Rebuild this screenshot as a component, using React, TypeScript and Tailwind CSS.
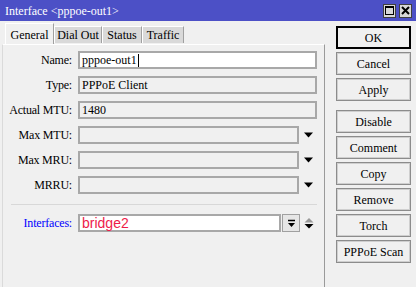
const serif = "font-['Liberation_Serif',serif]";

function DownArrow() {
  return (
    <svg width="9" height="6" viewBox="0 0 9 6">
      <path d="M0 0.5 H9 L4.5 5.5 Z" fill="#000" />
    </svg>
  );
}

function Field({ label, value, white, arrow }: { label: string; value?: string; white?: boolean; arrow?: boolean }) {
  return (
    <div className="flex items-center h-[18px]">
      <div className={`w-[69px] text-right text-[12px] tracking-[-0.2px] text-black ${serif}`}>{label}</div>
      <div
        className={`ml-[6px] h-[18px] border-2 border-[#a8a8a8] flex items-center pl-[2px] text-[12px] text-black ${serif} ${white ? "bg-white" : "bg-[#f0f0f0]"} ${arrow ? "w-[221px]" : "w-[239px]"}`}
      >
        {value}
        {white && <span className="ml-[1px] inline-block w-[1px] h-[13px] bg-black" />}
      </div>
      {arrow && (
        <div className="w-[18px] flex justify-center">
          <DownArrow />
        </div>
      )}
    </div>
  );
}

function Btn({ label, primary }: { label: string; primary?: boolean }) {
  return (
    <div
      className={`w-[75px] h-[23px] flex items-center justify-center text-[12px] text-black bg-[#f0f0f0] ${serif} ${
        primary ? "border-2 border-black" : "border border-[#8c8c8c] shadow-[inset_0_0_0_1px_#cfcfcf]"
      }`}
    >
      {label}
    </div>
  );
}

export default function App() {
  return (
    <div className="w-[416px] h-[287px] bg-[#f0f0f0] flex flex-col overflow-hidden">
      <div className="h-[21px] bg-[#4c50c6] flex items-center justify-between pl-[5px] pr-[4px]">
        <span className={`text-white text-[12px] ${serif}`}>Interface &lt;pppoe-out1&gt;</span>
        <div className="flex gap-[3px]">
          <div className="w-[13px] h-[14px] bg-[#d8d8d8] border border-[#404040] flex items-center justify-center">
            <div className="w-[9px] h-[9px] border border-black border-t-2" />
          </div>
          <div className="w-[13px] h-[14px] bg-[#d8d8d8] border border-[#404040] flex items-center justify-center">
            <svg width="9" height="9" viewBox="0 0 9 9">
              <path d="M1 1 L8 8 M8 1 L1 8" stroke="#000" strokeWidth="2" />
            </svg>
          </div>
        </div>
      </div>
      <div className="flex flex-1">
        <div className="w-[325px] pl-[2px] flex flex-col">
          <div className="h-[23px] pl-[3px] flex items-end">
            <div className={`w-[49px] h-[21px] bg-[#f0f0f0] border-t border-l border-white border-r border-r-[#a0a0a0] flex items-start justify-center pt-[2px] text-[12px] text-black ${serif}`}>
              General
            </div>
            <div className={`w-[48px] h-[17px] bg-[#d9d9d9] border-t border-l border-white border-r border-r-[#a0a0a0] mb-[1px] flex items-center justify-center text-[12px] text-black ${serif}`}>
              Dial Out
            </div>
            <div className={`w-[40px] h-[17px] bg-[#d9d9d9] border-t border-l border-white border-r border-r-[#a0a0a0] mb-[1px] flex items-center justify-center text-[12px] text-black ${serif}`}>
              Status
            </div>
            <div className={`w-[42px] h-[17px] bg-[#d9d9d9] border-t border-l border-white border-r border-r-[#a0a0a0] mb-[1px] flex items-center justify-center text-[12px] text-black ${serif}`}>
              Traffic
            </div>
          </div>
          <div className="flex-1 border-t border-t-white border-l border-l-[#dadada] border-r border-r-[#9a9a9a] pt-[6px] flex flex-col">
            <Field label="Name:" value="pppoe-out1" white />
            <div className="mt-[7px]"><Field label="Type:" value="PPPoE Client" /></div>
            <div className="mt-[7px]"><Field label="Actual MTU:" value="1480" /></div>
            <div className="mt-[7px]"><Field label="Max MTU:" arrow /></div>
            <div className="mt-[7px]"><Field label="Max MRU:" arrow /></div>
            <div className="mt-[7px]"><Field label="MRRU:" arrow /></div>
            <div className="mt-[10px] ml-[8px] w-[306px] h-[1px] bg-[#d8d8d8]" />
            <div className="mt-[9px] flex items-center h-[18px]">
              <div className={`w-[69px] text-right text-[12px] tracking-[-0.2px] text-[#0000ff] ${serif}`}>Interfaces:</div>
              <div className="ml-[6px] w-[203px] h-[18px] border-2 border-[#a8a8a8] bg-white flex items-center pl-[2px] text-[14px] text-[#ee1b4a] font-['Liberation_Sans',sans-serif]">
                bridge2
              </div>
              <div className="ml-[1px] w-[18px] h-[18px] border border-[#a0a0a0] bg-[#e6e6e6] flex items-center justify-center">
                <svg width="9" height="9" viewBox="0 0 9 9">
                  <path d="M1 1.5 H8" stroke="#000" strokeWidth="1.5" />
                  <path d="M1 4 H8 L4.5 8 Z" fill="#000" />
                </svg>
              </div>
              <div className="w-[18px] flex justify-center">
                <svg width="10" height="11" viewBox="0 0 10 11">
                  <path d="M0.5 4.5 H9.5 L5 0 Z" fill="#9a9a9a" />
                  <path d="M0.5 6 H9.5 L5 10.5 Z" fill="#000" />
                </svg>
              </div>
            </div>
          </div>
        </div>
        <div className="pl-[11px] pt-[5px] flex flex-col">
          <Btn label="OK" primary />
          <div className="mt-[3px]"><Btn label="Cancel" /></div>
          <div className="mt-[3px]"><Btn label="Apply" /></div>
          <div className="mt-[9px]"><Btn label="Disable" /></div>
          <div className="mt-[3px]"><Btn label="Comment" /></div>
          <div className="mt-[3px]"><Btn label="Copy" /></div>
          <div className="mt-[3px]"><Btn label="Remove" /></div>
          <div className="mt-[3px]"><Btn label="Torch" /></div>
          <div className="mt-[3px]"><Btn label="PPPoE Scan" /></div>
        </div>
      </div>
    </div>
  );
}
